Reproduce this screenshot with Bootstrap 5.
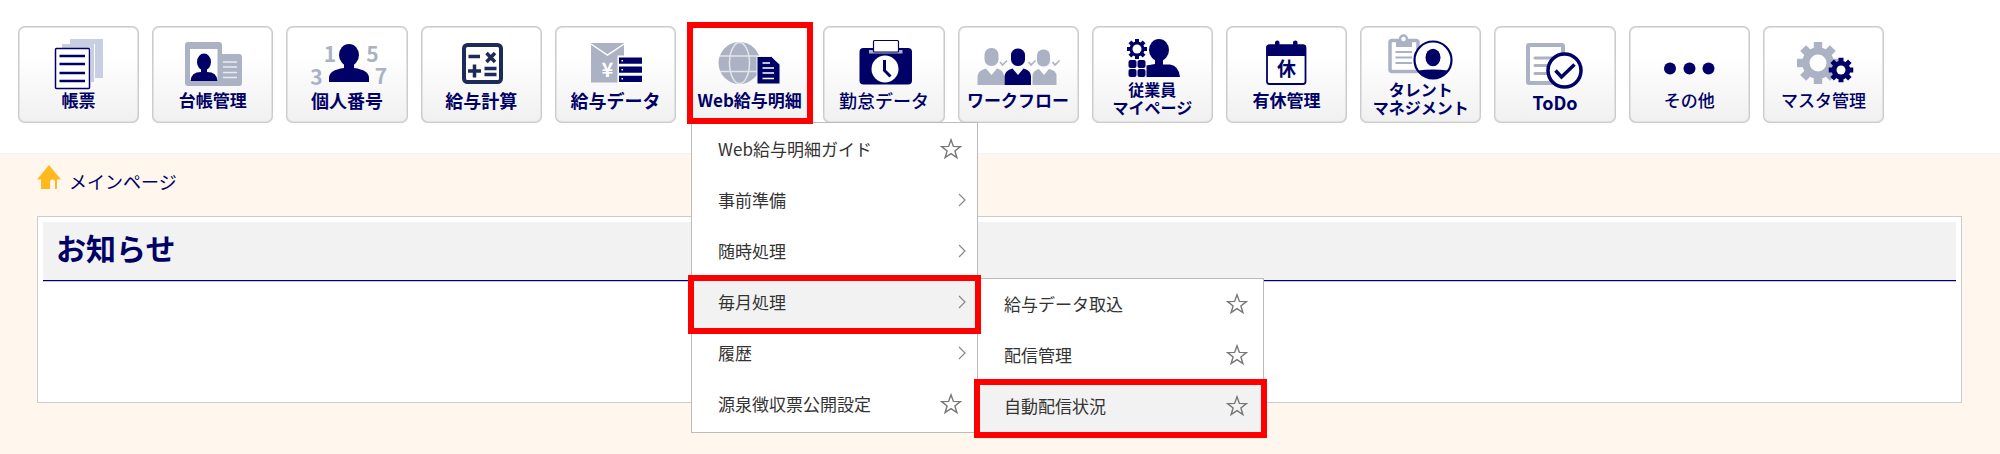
<!DOCTYPE html>
<html lang="ja">
<head>
<meta charset="utf-8">
<meta name="viewport" content="width=device-width, initial-scale=1">
<title>メインページ</title>
<link href="https://cdn.jsdelivr.net/npm/bootstrap@5.3.0/dist/css/bootstrap.min.css" rel="stylesheet">
<style>
:root { --navy: #000066; --steel: #aab2c4; --cream: #fff7ed; --alert: #ff0000; }
body { background: var(--cream); font-family: "Noto Sans CJK JP", sans-serif; color: #333; }
.app-header { padding: 26px 116px 30px 18px; border-bottom: 1px solid #f3f3f3; }
.tool-grid { display: grid; grid-template-columns: repeat(14, minmax(0, 1fr)); gap: 13px; }
.tool-btn { height: 97px; border: 0; border-radius: 7px; padding: 0; color: var(--navy);
  background: linear-gradient(#fff 30%, #f0f0f0); box-shadow: inset 0 0 0 1px #ccc, inset 0 0 0 2px #e2e2e2;
  font-size: 17px; line-height: 18px; font-weight: 700; white-space: nowrap; }
.tool-btn svg { width: 121px; flex: none; margin-bottom: -1px; }
.label-lg { font-size: 18px; }
.label-sm { font-size: 16px; }
.label-thin { font-weight: 500; }
.n { fill: var(--navy); } .g { fill: var(--steel); } .w { fill: #fff; }
.ns { stroke: var(--navy); fill: none; } .gs { stroke: var(--steel); fill: none; } .ws { stroke: #fff; fill: none; }
.marked::after { content: ""; position: absolute; border: 6px solid var(--alert); pointer-events: none; z-index: 5; }
.tool-item.marked::after { inset: -4px -3px -1px -2px; }
.flyout { position: absolute; width: 287px; background: #fff; border: 1px solid #bbb; z-index: 3; }
.flyout-main { top: 96px; left: 2px; padding: 1px 0 2px; }
.flyout-sub { top: 1px; left: 100%; }
.flyout-row { height: 51px; padding: 0 15px 2px 26px; font-size: 17px; line-height: 24px; color: #333; text-decoration: none; white-space: nowrap; }
.flyout-row.has-sub { padding-right: 11px; }
.flyout li.marked::after { inset: -2px -4px -6px -4px; }
.flyout li.marked > .flyout-row { background: #f2f2f2; box-shadow: 0 3px #f2f2f2; }
.page-body { padding: 11px 38px 51px 37px; }
.crumb { height: 24px; margin-bottom: 27px; gap: 8px; }
.crumb a { font-size: 18px; line-height: 24px; margin-top: 4px; color: var(--navy); text-decoration: none; }
.notice { border: 1px solid #ccc; padding: 5px; min-height: 187px; }
.notice h1 { margin: 0; padding: 0 13px; height: 59px; font-size: 30px; line-height: 50px; font-weight: 700;
  color: var(--navy); background: #f2f2f2; border-bottom: 1px solid var(--navy); box-shadow: 0 1px #c4c4e4; }
</style>
</head>
<body class="min-vh-100">
<svg width="0" height="0" class="position-absolute" aria-hidden="true">
  <symbol id="gear" viewBox="-20 -20 40 40">
    <circle r="15"/><rect x="-4" y="-20" width="8" height="40"/><rect x="-4" y="-20" width="8" height="40" transform="rotate(45)"/>
    <rect x="-4" y="-20" width="8" height="40" transform="rotate(90)"/><rect x="-4" y="-20" width="8" height="40" transform="rotate(135)"/>
  </symbol>
  <symbol id="star" viewBox="0 0 22 22"><path d="M11 1.8 13.4 8.4 20.4 8.6 14.9 12.9 16.9 19.7 11 15.7 5.1 19.7 7.1 12.9 1.6 8.6 8.6 8.4Z" fill="none" stroke="#777" stroke-width="1.4"/></symbol>
  <symbol id="chev" viewBox="0 0 8 14"><path d="M1 1 7 7 1 13" fill="none" stroke="#888" stroke-width="1.2"/></symbol>
</svg>

<header class="app-header bg-white">
  <ul class="tool-grid list-unstyled mb-0">
    <li class="tool-item position-relative"><button type="button" class="tool-btn w-100 d-flex flex-column align-items-center">
      <svg viewBox="0 0 121 66" height="66"><path fill="#c9cfe2" d="M52 13H85V52H77V18H52ZM44 18H76V56H73V22H44Z"/><rect x="37.5" y="22.5" width="34" height="40" rx="1" class="w" stroke="#000066" stroke-width="1.5"/><path class="ns" stroke-width="2.5" d="M41.5 30H67M41.5 38H67M41.5 47H67M41.5 55H67"/></svg>
      <span>帳票</span></button></li>
    <li class="tool-item position-relative"><button type="button" class="tool-btn w-100 d-flex flex-column align-items-center">
      <svg viewBox="0 0 121 66" height="66"><rect class="g" x="33" y="16" width="37" height="44" rx="3"/><rect class="g" x="60" y="28" width="30" height="32" rx="3"/><path class="w" d="M38 23H65.500V55H38Z"/><ellipse class="n" cx="52" cy="36" rx="7" ry="8.500"/><path class="n" d="M49 42H55V46Q65 46 65.500 55H38.500Q39 46 49 46Z"/><path stroke="#e8ebf2" stroke-width="1.300" d="M71 36H85M71 41H85M71 46.500H85M71 51.500H85"/></svg>
      <span>台帳管理</span></button></li>
    <li class="tool-item position-relative"><button type="button" class="tool-btn w-100 d-flex flex-column align-items-center">
      <svg viewBox="0 0 121 66" height="66"><ellipse class="n" cx="62" cy="29" rx="10" ry="11"/><path class="n" d="M57 37H67V42Q82 44 82 52V56H42V52Q42 44 57 42Z"/><g class="g" font-size="21" font-weight="700" text-anchor="middle"><text x="43" y="36">1</text><text x="85.500" y="36">5</text><text x="29.500" y="59">3</text><text x="94" y="58">7</text></g></svg>
      <span class="label-lg">個人番号</span></button></li>
    <li class="tool-item position-relative"><button type="button" class="tool-btn w-100 d-flex flex-column align-items-center">
      <svg viewBox="0 0 121 66" height="66"><rect x="43" y="19" width="37" height="37" rx="3.500" class="w" stroke="#1c2b57" stroke-width="4"/><path stroke="#1c2b57" stroke-width="3.500" fill="none" d="M47.500 30.500H59M65.500 27 74 36M74 27 65.500 36M47 45H60M53.500 38.500V51.500M63.500 42.500H75.500M63.500 48.500H75.500"/></svg>
      <span class="label-lg">給与計算</span></button></li>
    <li class="tool-item position-relative"><button type="button" class="tool-btn w-100 d-flex flex-column align-items-center">
      <svg viewBox="0 0 121 66" height="66"><path class="g" d="M36 17H69V56.500H36Z"/><path class="ws" stroke-width="1.500" d="M36 18 52.500 29 69 18"/><text class="w" x="52.500" y="51" font-size="20" font-weight="700" text-anchor="middle">¥</text><path class="w" d="M62.500 29.500H88V58H62.500Z"/><path class="n" d="M64 31.500H87V37.700H64ZM64 40.500H87V46.700H64ZM64 49.700H87V56H64Z"/><path class="w" d="M66.500 34h1.500v1.500h-1.500zM66.500 43h1.500v1.500h-1.500zM66.500 52h1.500v1.500h-1.500z"/></svg>
      <span class="label-lg">給与データ</span></button></li>
    <li class="tool-item marked position-relative"><button type="button" class="tool-btn w-100 d-flex flex-column align-items-center" aria-expanded="true">
      <svg viewBox="0 0 121 66" height="66"><circle class="g" cx="50.500" cy="37" r="21"/><g fill="none" stroke="#e3e6ed" stroke-width="1.500"><ellipse cx="50.500" cy="37" rx="10" ry="20.500"/><path d="M31 30H70M31 45.500H70"/></g><path d="M68 30.500H82.500L91 38.500V58H68Z" class="n" stroke="#f4f4f4" stroke-width="1"/><path stroke="#fff" stroke-width="1.400" d="M73.500 37H81M73.500 42H85M73.500 47H85M73.500 52.500H85"/></svg>
      <span>Web給与明細</span></button>
      <ul class="flyout flyout-main list-unstyled mb-0">
        <li><a href="#" class="flyout-row d-flex align-items-center justify-content-between">Web給与明細ガイド<svg width="22" height="22"><use href="#star"/></svg></a></li>
        <li><a href="#" class="flyout-row has-sub d-flex align-items-center justify-content-between">事前準備<svg width="8" height="14"><use href="#chev"/></svg></a></li>
        <li><a href="#" class="flyout-row has-sub d-flex align-items-center justify-content-between">随時処理<svg width="8" height="14"><use href="#chev"/></svg></a></li>
        <li class="marked position-relative"><a href="#" class="flyout-row has-sub d-flex align-items-center justify-content-between">毎月処理<svg width="8" height="14"><use href="#chev"/></svg></a>
          <ul class="flyout flyout-sub list-unstyled mb-0">
            <li><a href="#" class="flyout-row d-flex align-items-center justify-content-between">給与データ取込<svg width="22" height="22"><use href="#star"/></svg></a></li>
            <li><a href="#" class="flyout-row d-flex align-items-center justify-content-between">配信管理<svg width="22" height="22"><use href="#star"/></svg></a></li>
            <li class="marked position-relative"><a href="#" class="flyout-row d-flex align-items-center justify-content-between">自動配信状況<svg width="22" height="22"><use href="#star"/></svg></a></li>
          </ul>
        </li>
        <li><a href="#" class="flyout-row has-sub d-flex align-items-center justify-content-between">履歴<svg width="8" height="14"><use href="#chev"/></svg></a></li>
        <li><a href="#" class="flyout-row d-flex align-items-center justify-content-between">源泉徴収票公開設定<svg width="22" height="22"><use href="#star"/></svg></a></li>
      </ul>
    </li>
    <li class="tool-item position-relative"><button type="button" class="tool-btn w-100 d-flex flex-column align-items-center">
      <svg viewBox="0 0 121 66" height="66"><rect class="n" x="36.500" y="22" width="52.500" height="36.500" rx="4"/><path class="g" d="M46 24H79.500V27.500H46Z"/><rect x="50.500" y="14.500" width="25" height="11.500" rx="1" class="w" stroke="#000066" stroke-width="1.200"/><circle class="w" cx="62" cy="43" r="13.500"/><path class="ns" stroke-width="3" d="M61.500 34V44.500L67.500 50.500"/></svg>
      <span class="label-lg label-thin">勤怠データ</span></button></li>
    <li class="tool-item position-relative"><button type="button" class="tool-btn w-100 d-flex flex-column align-items-center">
      <svg viewBox="0 0 121 66" height="66"><rect class="g" x="26.500" y="22" width="14" height="18" rx="6.500"/><rect class="n" x="53" y="22.500" width="14" height="17.500" rx="6.500"/><rect class="g" x="79" y="23.500" width="13" height="17" rx="6"/><path class="g" d="M19.500 59V50Q20 44.500 28 42.500L33.500 49 39 42.500Q46 44.500 46 50V59Z"/><path class="n" d="M46.500 59V50Q47 44.500 54.500 42.500L60 49 65.500 42.500Q73 44.500 73 50V59Z"/><path class="g" d="M74.500 59V50Q75 44.500 81 43L86 49 91 43Q98.500 44.500 98.500 50V59Z"/><path class="gs" stroke-width="1.600" d="M42 36 44.500 39 49 34.500M70.500 36 73 39 77.500 34.500M94.500 36 97 39 101.500 34.500"/></svg>
      <span>ワークフロー</span></button></li>
    <li class="tool-item position-relative"><button type="button" class="tool-btn w-100 d-flex flex-column align-items-center">
      <svg viewBox="0 0 121 55" height="55"><use href="#gear" class="n" x="35" y="13" width="20" height="20"/><circle class="w" cx="45" cy="23" r="4.500"/><g class="n"><rect x="36.500" y="34" width="8" height="8" rx="2"/><rect x="45.500" y="34" width="8" height="8" rx="2"/><rect x="36.500" y="43" width="8" height="8" rx="2"/><rect x="45.500" y="43" width="8" height="8" rx="2"/><ellipse cx="67" cy="24" rx="10" ry="11"/><path d="M63 33H71V38.500H78Q87 40 88 51H54.500V39.500L63 38Z"/></g></svg>
      <span class="label-sm">従業員<br>マイページ</span></button></li>
    <li class="tool-item position-relative"><button type="button" class="tool-btn w-100 d-flex flex-column align-items-center">
      <svg viewBox="0 0 121 66" height="66"><rect x="41" y="19.500" width="38.500" height="38.500" rx="2.500" class="w" stroke="#000066" stroke-width="1.800"/><path class="n" d="M40.500 21Q40.500 18.500 43 18.500H77.500Q80 18.500 80 21V30H40.500ZM49 20V16.500Q49 14.500 51.300 14.500T53.500 16.500V20ZM67 20V16.500Q67 14.500 69.300 14.500T71.500 16.500V20Z"/><text class="n" x="60.500" y="50" font-size="19" font-weight="700" text-anchor="middle">休</text></svg>
      <span>有休管理</span></button></li>
    <li class="tool-item position-relative"><button type="button" class="tool-btn w-100 d-flex flex-column align-items-center">
      <svg viewBox="0 0 121 55" height="55"><rect x="30" y="14.500" width="28" height="31" rx="2" class="w" stroke="#aab2c4" stroke-width="3.500"/><path class="g" d="M36 14H52V21H36Z"/><circle cx="43.500" cy="13" r="3.500" class="w" stroke="#aab2c4" stroke-width="2.500"/><path class="gs" stroke-width="2" d="M35.500 26H52M35.500 31.500H52M35.500 37H52"/><circle cx="73" cy="34" r="18.500" class="w" stroke="#000066" stroke-width="2.200"/><ellipse class="n" cx="73" cy="31.500" rx="7.500" ry="8.700"/><path class="n" d="M58 44.500Q73 42.500 88 44.500Q83 52.500 73 52.500T58 44.500Z"/></svg>
      <span class="label-sm">タレント<br>マネジメント</span></button></li>
    <li class="tool-item position-relative"><button type="button" class="tool-btn w-100 d-flex flex-column align-items-center">
      <svg viewBox="0 0 121 66" height="68"><g transform="translate(0 -1)"><rect x="34" y="19" width="35" height="38" rx="1" class="w" stroke="#aab2c4" stroke-width="4"/><path class="gs" stroke-width="3" stroke-linecap="round" d="M41 32H60M41 39.500H56M41 47.500H56"/><circle cx="70.500" cy="44.500" r="16.500" class="w" stroke="#000066" stroke-width="3.500"/><path class="ns" stroke-width="3.500" d="M61.500 44.500 67.500 51 80.500 38.500"/></g></svg>
      <span class="label-lg">ToDo</span></button></li>
    <li class="tool-item position-relative"><button type="button" class="tool-btn w-100 d-flex flex-column align-items-center">
      <svg viewBox="0 0 121 66" height="66"><g class="n"><circle cx="41" cy="42.500" r="6"/><circle cx="60.500" cy="42.500" r="6"/><circle cx="79.500" cy="42.500" r="6"/></g></svg>
      <span class="label-thin">その他</span></button></li>
    <li class="tool-item position-relative"><button type="button" class="tool-btn w-100 d-flex flex-column align-items-center">
      <svg viewBox="0 0 121 66" height="66"><use href="#gear" class="g" x="34" y="16" width="42" height="42"/><circle class="w" cx="55" cy="37" r="8.500"/><use href="#gear" class="n" x="65.500" y="31.500" width="25" height="25"/><circle class="w" cx="78" cy="44" r="4.500"/></svg>
      <span class="label-thin">マスタ管理</span></button></li>
  </ul>
</header>

<main class="page-body">
  <nav class="crumb d-flex align-items-start" aria-label="現在位置">
    <svg width="24" height="24" viewBox="0 0 24 24" fill="#ffb91d"><path d="M12 0 24 14.500H20V24H18V16.500Q18 14.500 15.500 14.500T13 16.500V24H4V14.500H0Z"/></svg>
    <a href="#">メインページ</a>
  </nav>
  <section class="notice bg-white"><h1>お知らせ</h1></section>
</main>
<script src="https://cdn.jsdelivr.net/npm/bootstrap@5.3.0/dist/js/bootstrap.bundle.min.js"></script>
</body>
</html>
